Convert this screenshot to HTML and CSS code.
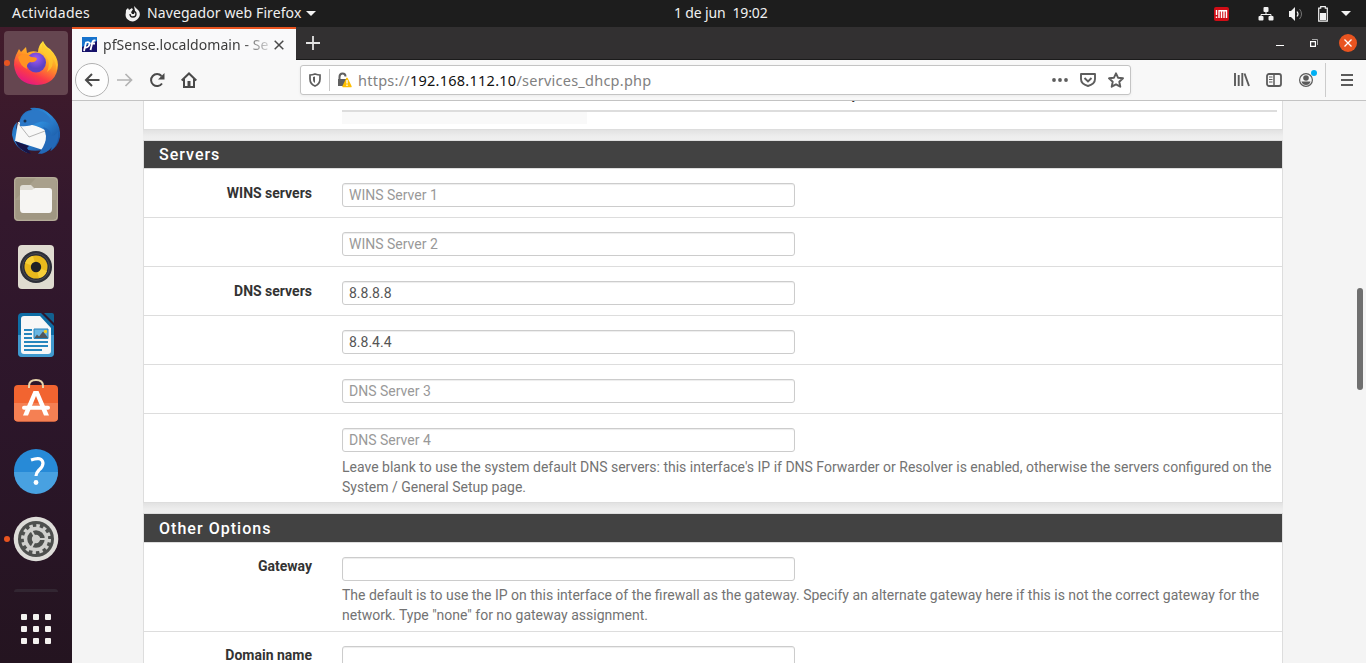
FILE: index.html
```html
<!DOCTYPE html>
<html lang="es">
<head>
<meta charset="utf-8">
<title>pfSense.localdomain - Services: DHCP Server</title>
<link rel="stylesheet" href="styles.css">
</head>
<body>
<header class="topbar">
  <span class="activities">Actividades</span>
  <svg class="ff-mini" width="16" height="16" viewBox="0 0 16 16"><path d="M1 4 3 2l1 2 3-2 1 2-2 2 1 2h2l1-3-1-5 3 3 2 2q2 4-.5 7Q10 16.500 5 15-.5 12.500.8 7Z" fill="#f2f2f2"/><path d="M7 5q4 0 4 3t-3 3-3-3" fill="none" stroke="#1d1d1d" stroke-width="1.300"/></svg>
  <span class="app-name">Navegador web Firefox</span>
  <svg class="app-caret" width="10" height="5" viewBox="0 0 10 5"><path d="M0 0h10L5 5z" fill="#f2f2f2"/></svg>
  <span class="clock">1 de jun&nbsp; 19:02</span>
  <div class="status">
    <svg width="16" height="16" viewBox="0 0 16 16"><rect x="1" y="1" width="15" height="14" rx="2" fill="#d00d16"/><path d="M3.500 4v5M3.500 10.500V12M6 12V4.700h7.500V12M8.500 5v7M11 5v7" fill="none" stroke="#fff" stroke-width="1.400"/></svg>
    <svg class="net" width="16" height="14" viewBox="0 0 16 14"><path d="M8 4v3M3 11V7.500h10V11" fill="none" stroke="#f2f2f2"/><rect x="5.500" y="0" width="5" height="5" rx="1" fill="#f2f2f2"/><rect x=".5" y="9" width="5" height="4.500" rx="1" fill="#f2f2f2"/><rect x="10.500" y="9" width="5" height="4.500" rx="1" fill="#f2f2f2"/></svg>
    <svg class="vol" width="16" height="14" viewBox="0 0 16 14"><path d="M1 4h2l4-4v14l-4-4H1z" fill="#f2f2f2"/><path d="M9 4.500q2 2.500 0 5" fill="none" stroke="#f2f2f2" stroke-width="1.200"/><path d="M11.500 2q4 5 0 10" fill="none" stroke="#777"/></svg>
    <svg class="bat" width="10" height="16" viewBox="0 0 10 16"><path d="M.7 2.200h2V.7h4.600v1.500h2v13H.7z" fill="none" stroke="#f2f2f2" stroke-width="1.200"/><path d="M2 7h6v7H2z" fill="#f2f2f2"/></svg>
    <svg class="caret" width="10" height="5" viewBox="0 0 10 5"><path d="M0 0h10L5 5z" fill="#f2f2f2"/></svg>
  </div>
</header>

<div class="desktop">
  <nav class="dock">
    <div class="app active running">
      <svg width="48" height="48" viewBox="0 0 48 48">
        <defs>
          <linearGradient id="fx" x1=".8" y1="0" x2=".3" y2="1"><stop offset=".1" stop-color="#ffe83b"/><stop offset=".45" stop-color="#ff9a24"/><stop offset=".75" stop-color="#fb3b48"/><stop offset="1" stop-color="#e31587"/></linearGradient>
          <radialGradient id="globe" cx=".5" cy=".3"><stop offset="0" stop-color="#a259f5"/><stop offset="1" stop-color="#5b42c4"/></radialGradient>
        </defs>
        <path d="M4 16 7 10l2 3 5-5 1 6q5-3 11-1 0-6 5-11 2 5 7 8 8 8 8 16Q45 45 25 46 4 45 2 26q0-6 2-10z" fill="url(#fx)"/>
        <circle cx="24" cy="23.500" r="10" fill="url(#globe)"/>
        <path d="M6 18q3-3 9-3l4 3q6 0 6 2-2 4-7 3-4 2-3 7Q8 27 6 18z" fill="#ff9322"/>
        <path d="M31 2q-4 9 3 15 5 7 1 16 8-5 5-15 5 6 4 14 4-14-7-21-6-4-6-9z" fill="#ffc92e" opacity=".7"/>
      </svg>
    </div>
    <div class="app">
      <svg width="48" height="48" viewBox="0 0 48 48">
        <defs><linearGradient id="tb" x1="0" y1="0" x2="1" y2="1"><stop offset="0" stop-color="#1c5eac"/><stop offset=".45" stop-color="#2e8bda"/><stop offset="1" stop-color="#14418c"/></linearGradient></defs>
        <path d="M9 10Q13 3 20 3l-2-2q13-2 22 8 9 9 8 21-2 10-10 14l2-4q-6 7-12 7l4-4q-15 2-20-2l3 5Q2 40 0 28q0-8 5-13l-1 8z" fill="url(#tb)"/>
        <path d="M6 15 3 34l28 9q5-8 2-20-9-5-18-6z" fill="#f8f8f8"/>
        <path d="m6 16 11 14 16-6" fill="none" stroke="#b5b5b5"/>
        <path d="M8 15Q12 4 21 3q16 0 20 15-9-6-17-2-7 4-16 3z" fill="#2b78c7"/>
        <path d="M3 34q4 10 16 13l-4-6 2-2z" fill="#171548"/>
        <path d="M31 20q8 12-5 27 9-1 14-7l-1 4q9-8 7-20-4 6-7 4 0-6-8-8z" fill="#2369b8"/>
        <circle cx="13" cy="14" r="1.500" fill="#173050"/>
      </svg>
    </div>
    <div class="app">
      <svg width="48" height="48" viewBox="0 0 48 48"><rect x="2" y="2" width="44" height="44" rx="4" fill="#a09782"/><rect x="2.700" y="2.700" width="42.600" height="42.600" rx="4" fill="none" stroke="#bbb29f"/><path d="M3 25 24 3h20v22z" fill="#b1a996" opacity=".5"/><path d="M8 13q0-3 3-3h8l4 4-3 4H8z" fill="#e0ddd5"/><path d="M8 15h12l3-2h14q3 0 3 3v18q0 4-3 4H11q-3 0-3-4z" fill="#f6f5f3"/></svg>
    </div>
    <div class="app">
      <svg width="48" height="48" viewBox="0 0 48 48"><rect x="6" y="2" width="36" height="44" rx="4" fill="#dfdbd0"/><circle cx="24" cy="24" r="16" fill="#2c2e37"/><circle cx="24" cy="24" r="13.500" fill="none" stroke="#4a4b51"/><circle cx="24" cy="24" r="11.500" fill="#e9b91c"/><path d="m24 24-11-4q2-6 8-7zM24 24l11 4q-2 6-8 7z" fill="#f6cf39"/><circle cx="24" cy="24" r="5.200" fill="#202126"/></svg>
    </div>
    <div class="app">
      <svg width="48" height="48" viewBox="0 0 48 48"><path d="M10 2h19l13 13v27q0 4-4 4H10q-4 0-4-4V6q0-4 4-4z" fill="#0e6da5"/><path d="M6 24h36v18q0 4-4 4H10q-4 0-4-4z" fill="#4099ce"/><path d="M32 2h8q2 0 2 2v8z" fill="#12608f"/><path d="M12 5h16l11 12v23q0 3-3 3H12q-3 0-3-3V8q0-3 3-3z" fill="#f7f7f7"/><path d="M12 19h8M12 23h8M12 27h8M12 31h24M12 35h24M12 39h18" stroke="#2685bd" stroke-width="2"/><path d="M22 18h14v9.500H22z" fill="#6ab6e2"/><path d="m22 27.500 3-4 2 2 4-5 5 6v1z" fill="#50575c"/><circle cx="33.500" cy="20.500" r="1.700" fill="#f5ce22"/><path d="M22 18h14v9.500H22z" fill="none" stroke="#2685bd"/></svg>
    </div>
    <div class="app">
      <svg width="48" height="48" viewBox="0 0 48 48"><rect x="2" y="6" width="44" height="36.500" rx="4" fill="#f26430"/><path d="M2 24h44v14.500q0 4-4 4H6q-4 0-4-4z" fill="#f58053"/><path d="M17 9V7q0-6 7-6t7 6v2" fill="none" stroke="#e8d5ac" stroke-width="2"/><path d="M11 36.500 21.500 12h5L37 36.500h-5L24 17l-8 19.500z" fill="#fff"/><path d="M12 28.700h24" stroke="#fff" stroke-width="4" stroke-linecap="round"/></svg>
    </div>
    <div class="app">
      <svg width="48" height="48" viewBox="0 0 48 48"><circle cx="24" cy="24" r="22" fill="#278ad7"/><path d="M2 25h44a22 22 0 0 1-44 0" fill="#48a1e1"/><path d="M19 13q11-4 12 3 0 4-4 7-3 3-3 6" fill="none" stroke="#fff" stroke-width="3.200"/><circle cx="24" cy="35.500" r="2.400" fill="#fff"/></svg>
    </div>
    <div class="app running">
      <svg width="48" height="48" viewBox="0 0 48 48"><circle cx="24" cy="24" r="22.300" fill="#deddd9"/><circle cx="24" cy="24" r="18" fill="#4e504e"/><circle cx="24" cy="24" r="13" fill="none" stroke="#d0d0cd" stroke-width="4" stroke-dasharray="3.400 3.400"/><circle cx="24" cy="24" r="10.500" fill="none" stroke="#d0d0cd" stroke-width="3.500"/><circle cx="24" cy="24" r="4.200" fill="#d0d0cd"/><path d="M24 24 18 13M24 24h12M24 24l-6 11" stroke="#d0d0cd" stroke-width="2"/></svg>
    </div>
    <div class="dock-line"></div>
    <div class="app-grid"><i></i><i></i><i></i><i></i><i></i><i></i><i></i><i></i><i></i></div>
  </nav>

  <div class="browser">
    <div class="tabbar">
      <div class="tab">
        <svg width="15" height="15" viewBox="0 0 15 15"><path d="M0 0h15v15H0z" fill="#17126b"/><path d="M0 0h15v4L0 10z" fill="#1672cc"/><path d="M2 14 4 5.500q3.500-1 3.500 1-.5 4-4 4M8.500 13l2-8q.6-2 3-1.300M8.500 6.500H13" fill="none" stroke="#fff" stroke-width="1.800"/></svg>
        <span class="tab-title">pfSense.localdomain - Se</span>
        <svg class="tab-close" width="10" height="10" viewBox="0 0 10 10"><path d="m.7.700 8.600 8.600M9.300.700.7 9.300" stroke="#4a4a4a" stroke-width="1.500"/></svg>
      </div>
      <svg class="new-tab" width="14" height="14" viewBox="0 0 14 14"><path d="M7 0v14M0 7h14" stroke="#e3e3e3" stroke-width="1.800"/></svg>
      <div class="window-buttons">
        <svg width="8" height="8" viewBox="0 0 8 8"><path d="M0 6.500h8" stroke="#fff"/></svg>
        <svg class="restore" width="8" height="8" viewBox="0 0 8 8"><path d="M2 .5h5.500V6" fill="none" stroke="#aaa"/><path d="M.6 2.600h4.800v4.800H.6z" fill="none" stroke="#fff" stroke-width="1.200"/></svg>
        <svg class="close" width="18" height="18" viewBox="0 0 18 18"><circle cx="9" cy="9" r="9" fill="#e95420"/><path d="m5.500 5.500 7 7m0-7-7 7" stroke="#fff" stroke-width="1.300"/></svg>
      </div>
    </div>

    <div class="toolbar">
      <div class="back"><svg width="16" height="14" viewBox="0 0 16 14"><path d="M15.500 7H2M8 1 2 7l6 6" fill="none" stroke="#4a4a4a" stroke-width="2"/></svg></div>
      <svg class="forward" width="16" height="14" viewBox="0 0 16 14"><path d="M0 7h14M8.500 1l6 6-6 6" fill="none" stroke="#b3b3b3" stroke-width="1.700"/></svg>
      <svg class="reload" width="16" height="16" viewBox="0 0 16 16"><path d="M13 11.500A6 6 0 1 1 12.500 4" fill="none" stroke="#4a4a4a" stroke-width="2"/><path d="M15.500 1v6.500H9z" fill="#4a4a4a"/></svg>
      <svg class="home" width="16" height="16" viewBox="0 0 16 16"><path d="m.7 8.500 7.300-7 7.300 7" fill="none" stroke="#4a4a4a" stroke-width="2"/><path d="M3 7v8h10V7" fill="none" stroke="#4a4a4a" stroke-width="2"/><path d="M6.500 9h3v6h-3z" fill="#4a4a4a"/></svg>
      <div class="urlbar">
        <svg class="shield" width="12" height="14" viewBox="0 0 12 14"><path d="M6 1q3 1 5 1v4q0 5-5 7-5-2-5-7V2q2 0 5-1z" fill="none" stroke="#5d5d5d" stroke-width="1.700"/><path d="M6 3.500 4 4v3q0 2 2 3z" fill="#5d5d5d"/></svg>
        <span class="sep"></span>
        <svg class="lock" width="16" height="16" viewBox="0 0 16 16"><path d="M3.500 7V5q0-3.500 3-3.500t3 3" fill="none" stroke="#606060" stroke-width="2"/><path d="M2 7h8v7H2z" fill="#606060"/><path d="M11 6.300 15 14.500H7z" fill="#ffbf00" stroke="#ffbf00" stroke-width="1.500" stroke-linejoin="round"/><path d="M11 8v3.500M11 12.500V14" stroke="#fff" stroke-width="1.300"/></svg>
        <span class="url">https://<b>192.168.112.10</b>/services_dhcp.php</span>
        <svg class="dots" width="16" height="4" viewBox="0 0 16 4"><g fill="#5d5d5d"><circle cx="2" cy="2" r="1.900"/><circle cx="8" cy="2" r="1.900"/><circle cx="14" cy="2" r="1.900"/></g></svg>
        <svg class="pocket" width="16" height="14" viewBox="0 0 16 14"><path d="M1 1h14v5q0 5-7 7-7-2-7-7z" fill="none" stroke="#5d5d5d" stroke-width="1.900" stroke-linejoin="round"/><path d="m4.500 5 3.500 3.500L11.500 5" fill="none" stroke="#5d5d5d" stroke-width="1.900"/></svg>
        <svg class="star" width="16" height="16" viewBox="0 0 16 16"><path d="m8 1.300 2 4.400 5 .6-3.700 3.400 1 5L8 12.300l-4.300 2.400 1-5L1 6.300l5-.6z" fill="none" stroke="#5d5d5d" stroke-width="1.900" stroke-linejoin="round"/></svg>
      </div>
      <svg class="library" width="16" height="14" viewBox="0 0 16 14"><path d="M1 0v13M4.700 2v11M8.300 0v13M10.500.500 15 13" stroke="#5b5b5b" stroke-width="1.900"/></svg>
      <svg class="sidebar" width="16" height="14" viewBox="0 0 16 14"><rect x="1" y="1" width="14" height="12" rx="2" fill="none" stroke="#5b5b5b" stroke-width="1.800"/><path d="M8 1v12" stroke="#5b5b5b" stroke-width="1.500"/><path d="M3 4h3.500M3 6.500h3.500M3 9h3.500" stroke="#5b5b5b"/></svg>
      <svg class="account" width="19" height="18" viewBox="0 0 19 18"><circle cx="7" cy="11" r="6.400" fill="none" stroke="#5b5b5b" stroke-width="1.200"/><circle cx="7" cy="9" r="2.800" fill="#5b5b5b"/><path d="M2.500 12.500h9Q10.500 16 7 16t-4.500-3.500z" fill="#5b5b5b"/><circle cx="15" cy="4" r="3" fill="#00b0f4"/></svg>
      <span class="menu-sep"></span>
      <svg class="menu" width="12" height="12" viewBox="0 0 12 12"><path d="M0 1h12M0 6h12M0 11h12" stroke="#5b5b5b" stroke-width="2"/></svg>
    </div>

    <main class="page">
      <section class="panel leases">
        <div class="table-head"><span>Description</span></div>
        <div class="table-stripe"></div>
      </section>

      <section class="panel">
        <h2>Servers</h2>
        <div class="row"><label>WINS servers</label><div class="field"><input placeholder="WINS Server 1"></div></div>
        <div class="row"><label></label><div class="field"><input placeholder="WINS Server 2"></div></div>
        <div class="row"><label>DNS servers</label><div class="field"><input value="8.8.8.8"></div></div>
        <div class="row"><label></label><div class="field"><input value="8.8.4.4"></div></div>
        <div class="row"><label></label><div class="field"><input placeholder="DNS Server 3"></div></div>
        <div class="row"><label></label><div class="field"><input placeholder="DNS Server 4"><p>Leave blank to use the system default DNS servers: this interface's IP if DNS Forwarder or Resolver is enabled, otherwise the servers configured on the System / General Setup page.</p></div></div>
      </section>

      <section class="panel options">
        <h2>Other Options</h2>
        <div class="row gateway"><label>Gateway</label><div class="field"><input><p>The default is to use the IP on this interface of the firewall as the gateway. Specify an alternate gateway here if this is not the correct gateway for the network. Type "none" for no gateway assignment.</p></div></div>
        <div class="row"><label>Domain name</label><div class="field"><input></div></div>
      </section>
      <div class="scroll-thumb"></div>
    </main>
  </div>
</div>
</body>
</html>
```

FILE: styles.css
```css
* { box-sizing: border-box; }
body { margin: 0; width: 1366px; height: 663px; overflow: hidden; font-family: "Noto Sans", sans-serif; }
svg { display: block; flex: none; }

.topbar { height: 27px; background: #1d1d1d; color: #f0f0f0; font-size: 14px; line-height: 26px; display: flex; align-items: center; padding-left: 12px; white-space: nowrap; }
.activities { width: 113px; letter-spacing: 0.3px; height: 27px; }
.app-name { width: 155px; margin-left: 6px; height: 27px; letter-spacing: 0.1px; }
.app-caret { margin-left: 4px; }
.clock { margin-left: 358px; width: 110px; height: 27px; letter-spacing: -0.15px; }
.status { display: flex; align-items: center; margin-left: 429px; }
.net { margin-left: 29px; }
.vol { margin-left: 14px; }
.bat { margin-left: 14px; }
.caret { margin-left: 13px; }

.desktop { display: flex; height: 636px; }
.dock { width: 72px; flex: none; background: linear-gradient(#421b2b, #33182d 30%, #2c162a 60%, #241420); padding: 4px; display: flex; flex-direction: column; gap: 4px; }
.app { position: relative; height: 64px; flex: none; display: flex; align-items: center; justify-content: center; border-radius: 4px; }
.active { background: #654650; }
.running::before { content: ""; position: absolute; left: 0; top: 29px; width: 6px; height: 6px; border-radius: 50%; background: #e95420; }
.dock-line { width: 44px; height: 3px; margin: 14px auto 0; border-radius: 4px 4px 0 0; background: #322632; }
.app-grid { margin: 18px auto 0; display: grid; grid-template-columns: repeat(3, 6px); grid-auto-rows: 6px; gap: 6px; }
.app-grid i { background: #f4f2f0; border-radius: 1px; }

.browser { flex: 1; min-width: 0; display: flex; flex-direction: column; }
.tabbar { height: 33px; flex: none; background: #323031; border-bottom: 1px solid #1b1b1b; display: flex; align-items: center; }
.tab { width: 224px; height: 33px; margin-bottom: -1px; background: #f9f9fa; border-top: 2px solid #e95420; display: flex; align-items: center; padding-left: 10px; color: #3c3c3c; }
.tab-title { width: 165px; margin-left: 6px; font-size: 14px; line-height: 20px; letter-spacing: 0.06px; white-space: nowrap; -webkit-mask-image: linear-gradient(90deg, #000 138px, transparent 172px); mask-image: linear-gradient(90deg, #000 138px, transparent 172px); }
.tab-close { margin-left: 6px; }
.new-tab { margin-left: 10px; }
.window-buttons { display: flex; align-items: center; margin-left: auto; padding-right: 9px; }
.restore { margin-left: 26px; }
.close { margin-left: 21px; }

.toolbar { height: 41px; flex: none; background: #f8f8f8; border-bottom: 1px solid #c3c3c3; display: flex; align-items: center; padding-left: 3px; }
.back { width: 34px; height: 34px; border: 1px solid #b1b1b1; border-radius: 50%; background: #fdfdfd; display: flex; align-items: center; justify-content: center; }
.forward { margin-left: 8px; }
.reload { margin-left: 16px; }
.home { margin-left: 16px; }
.urlbar { width: 831px; height: 30px; margin-left: 103px; background: #fff; border: 1px solid #c4c4c4; border-radius: 3px; display: flex; align-items: center; padding-left: 8px; box-shadow: 0 1px 3px rgba(0,0,0,.06); }
.sep { width: 1px; height: 22px; margin-left: 8px; background: #c8c8c8; }
.lock { margin-left: 6px; }
.url { width: 690px; margin-left: 6px; color: #818181; font-size: 14.5px; letter-spacing: 0.25px; white-space: nowrap; }
.url b { color: #111; font-weight: 400; }
.dots { margin-left: 4px; }
.pocket { margin-left: 12px; }
.star { margin-left: 12px; }
.library { margin-left: 103px; }
.sidebar { margin-left: 16px; }
.account { margin: -4px 0 0 17px; }
.menu-sep { width: 1px; height: 34px; margin-left: 7px; background: #ccc; }
.menu { margin-left: 15px; }

.page { position: relative; flex: 1; min-height: 0; overflow: hidden; background: #f4f4f4; padding: 0 83px 0 71px; font: 14px/20px Roboto, sans-serif; color: #333; }
.panel { background: #fff; border: 1px solid #ddd; margin-bottom: 10px; position: relative; width: 1140px; }
.panel::after { content: ""; position: absolute; left: -1px; right: -1px; top: calc(100% + 1px); height: 10px; background: linear-gradient(#e2e2e2, #ededed 60%, #efefef); }
.panel.leases { height: 29px; border-top: 0; padding-left: 198px; }
.table-head { width: 935px; height: 11px; border-bottom: 2px solid #ddd; font-weight: 700; display: flex; align-items: flex-end; justify-content: center; padding-left: 76px; }
.table-head span { height: 26px; }
.table-stripe { width: 245px; height: 12px; background: #f9f9f9; }
h2 { margin: 0; height: 28px; padding-left: 15px; background: #424242; border-bottom: 1px solid #ddd; color: #fff; font: 500 16px/27px Roboto, sans-serif; letter-spacing: 1px; }
.options h2 { height: 29px; line-height: 29px; letter-spacing: 1.03px; }
.row { display: flex; min-height: 49px; padding-top: 14px; border-bottom: 1px solid #ddd; }
.row:last-child { border-bottom: 0; }
label { width: 168px; text-align: right; font-weight: 700; flex: none; }
.options label { margin-top: -1px; }
.field { width: 935px; margin-left: 30px; }
input { display: block; width: 453px; height: 24px; border: 1px solid #ccc; border-radius: 3px; padding: 0 6px; font: 14px/20px Roboto, sans-serif; color: #555; background: #fff; box-shadow: inset 0 1px 1px rgba(0,0,0,.075); }
input::placeholder { color: #999; opacity: 1; }
p { margin: 5px 0; color: #737373; }
.gateway p { margin: 4px 0 6px; }
.scroll-thumb { position: absolute; left: 1285px; top: 187px; width: 6px; height: 102px; border-radius: 3px; background: #6f6f6f; }
```
